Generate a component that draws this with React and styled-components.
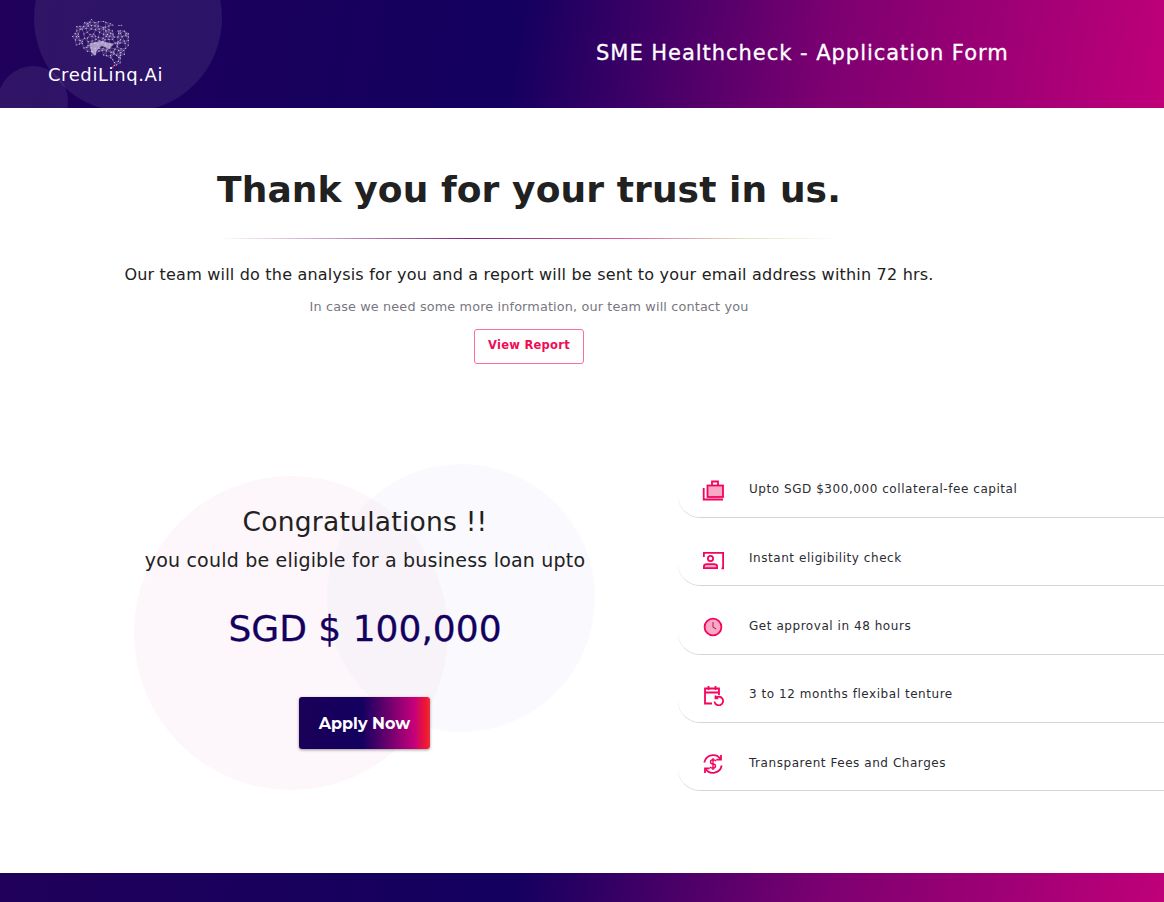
import React from "react";
import styled, { createGlobalStyle } from "styled-components";

const Global = createGlobalStyle`
  html, body { margin: 0; padding: 0; background: #fff; }
  body { font-family: "DejaVu Sans", "Noto Sans", sans-serif; color: #212121; }
  * { box-sizing: border-box; }
`;
const brand = `linear-gradient(100deg, #20005a 0%, #13005f 44%, #7d0071 71%, #bf0079 100%)`;
const Page = styled.div`
  width: 1164px; height: 902px; display: flex; flex-direction: column; overflow: hidden;
`;
const Header = styled.header`
  position: relative; height: 108px; flex: none; overflow: hidden;
  display: grid; grid-template-columns: 596px 1fr; align-items: center;
  background: ${brand};
`;
const HeaderCircle = styled.div`
  position: absolute; border-radius: 50%; background: rgba(255,255,255,0.08);
  left: ${p => p.$x}px; top: ${p => p.$y}px; width: ${p => p.$s}px; height: ${p => p.$s}px;
`;
const Logo = styled.div`
  position: relative; display: flex; flex-direction: column; align-items: center; align-self: start;
  width: 113px; margin: 0 0 0 49px; padding-top: 19px;
`;
const BrainSvg = styled.svg`
  width: 60px; height: 49px; margin-right: 7px; display: block;
`;
const LogoText = styled.div`
  color: #fff; font-size: 18px; line-height: 20px;
  letter-spacing: 0.6px; white-space: nowrap; margin-top: -3px;
`;
const HeaderTitle = styled.h1`
  position: relative; margin: -3px 0 0; color: #fff; font-size: 21px; font-weight: 400; line-height: 24px;
  -webkit-text-stroke: 0.3px #fff; white-space: nowrap; letter-spacing: 0.97px;
`;
const Main = styled.main`
  flex: 1; display: flex; flex-direction: column;
`;
const Thanks = styled.section`
  width: 1058px; display: flex; flex-direction: column; align-items: center; padding-top: 59px;
`;
const Heading = styled.h2`
  margin: 0; font-size: 36px; line-height: 46px; font-weight: 700; color: #212121; white-space: nowrap;
  letter-spacing: 0.1px;
`;
const Divider = styled.div`
  width: 622px; height: 1px; margin-top: 25px;
  background: linear-gradient(90deg, rgba(20,0,94,0) 0%, #83247a 40%, #e0589a 65%, #dfe6c2 85%, rgba(255,255,255,0) 100%);
`;
const Lead = styled.p`
  margin: 26px 0 0; font-size: 16px; line-height: 20px; color: #212121; white-space: nowrap; letter-spacing: 0.2px;
`;
const Note = styled.p`
  margin: 14px 0 0; font-size: 12.8px; line-height: 16px; color: #77777f; white-space: nowrap; letter-spacing: 0.15px;
`;
const ReportButton = styled.button`
  margin-top: 14px; width: 110px; height: 35px; background: #fff; border: 1px solid #fb6f9f; border-radius: 3px;
  color: #ef0b56; font: 700 11.5px "DejaVu Sans", sans-serif; padding: 0 0 3px; letter-spacing: 0.25px;
`;
const Offer = styled.section`
  display: grid; grid-template-columns: 678px 1fr; margin-top: 100px; flex: 1;
`;
const Eligibility = styled.div`
  position: relative; display: flex; flex-direction: column; align-items: center;
  width: 730px; padding-top: 42px;
`;
const Blob = styled.div`
  position: absolute; border-radius: 50%;
  left: ${p => p.$x}px; top: ${p => p.$y}px; width: ${p => p.$s}px; height: ${p => p.$s}px;
  background: ${p => p.$c};
`;
const Congrats = styled.div`
  position: relative; font-size: 26.5px; line-height: 32px; color: #212121; white-space: nowrap; letter-spacing: 0.25px;
`;
const Sub = styled.div`
  position: relative; margin-top: 10px; font-size: 19px; line-height: 24px; color: #212121; white-space: nowrap; letter-spacing: 0.2px;
`;
const Amount = styled.div`
  position: relative; margin-top: 35px; font-size: 36px; line-height: 44px; color: #13005f; white-space: nowrap;
  -webkit-text-stroke: 0.3px #13005f;
`;
const ApplyButton = styled.button`
  position: relative; margin: 46px 1px 0 0; width: 131px; height: 52px; border: 0; border-radius: 3px;
  color: #fff; font: 700 16px "Montserrat", "Open Sans", sans-serif; padding: 0;
  background: linear-gradient(90deg, #1a0058 0%, #13005f 48%, #c4007c 88%, #f0182f 97%, #e73040 100%);
  box-shadow: 0 1px 3px rgba(0,0,0,0.4);
`;
const Features = styled.ul`
  list-style: none; margin: -14.3px 0 0; padding: 0; display: flex; flex-direction: column; position: relative;
`;
const Feature = styled.li`
  height: 68.3px; display: flex; align-items: center; padding: 14px 0 0 24px; gap: 25px;
  border-bottom: 1px solid #d6d6d6; border-bottom-left-radius: 22px;
`;
const IconBox = styled.svg`
  width: 22px; height: 22px; flex: none;
`;
const FeatureText = styled.span`
  font-size: 12px; color: #2b2b33; white-space: nowrap; letter-spacing: 0.55px; margin-top: -2px;
`;
const Footer = styled.footer`
  height: 29px; flex: none;
  background: ${brand};
`;

const outline = [[0,16],[4,8],[12,3],[20,0],[30,2],[38,2],[48,5],[56,10],[60,18],[58,28],[54,31],[52,38],[50,46],[48,49],[42,47],[38,38],[30,36],[24,36],[20,38],[14,32],[6,28],[1,24]];
const inside = (x, y) => {
  let hit = false;
  for (let i = 0, j = outline.length - 1; i < outline.length; j = i++) {
    const [xi, yi] = outline[i], [xj, yj] = outline[j];
    if ((yi > y) !== (yj > y) && x < ((xj - xi) * (y - yi)) / (yj - yi) + xi) hit = !hit;
  }
  return hit;
};
const meshNodes = (() => {
  let seed = 7;
  const rnd = () => ((seed = (seed * 16807) % 2147483647) / 2147483647);
  const pts = [];
  for (let y = 0; y <= 49; y += 3.6) for (let x = 0; x <= 60; x += 3.8) {
    const px = x + rnd() * 2.6 - 1.3, py = y + rnd() * 2.6 - 1.3;
    if (inside(px, py)) pts.push([px, py]);
  }
  return pts;
})();
const meshLines = (() => {
  let d = "";
  meshNodes.forEach((a, i) => meshNodes.slice(i + 1).forEach(b => {
    if (Math.hypot(a[0] - b[0], a[1] - b[1]) < 5.4) d += `M${a[0].toFixed(1)} ${a[1].toFixed(1)}L${b[0].toFixed(1)} ${b[1].toFixed(1)}`;
  }));
  return d;
})();
const Brain = () => (
  <BrainSvg viewBox="0 0 60 49" fill="none">
    <path d={meshLines} stroke="#c9bddf" strokeWidth="0.4" strokeOpacity="0.75" />
    {meshNodes.map(([x, y], i) => <circle key={i} cx={x} cy={y} r="0.5" fill="#e4dcf0" />)}
    <path d="M18 24 L30 22 L42 25 L37 30 L30 27 L25 31 L23 37 L19 33Z" fill="#cfc4e4" fillOpacity="0.75" />
    <circle cx="41" cy="48" r="1" fill="#e0105e" />
  </BrainSvg>
);

const C = "#f5045f", F = "#f9a9c6";
const icons = [
  <IconBox viewBox="0 0 22 22" fill="none" stroke={C} strokeWidth="1.8" key="a">
    <rect x="5.500" y="6.500" width="15.500" height="11.500" fill={F}/><path d="M10 6.500V2.500h6v4"/><path d="M1.700 9v11.500H21"/>
  </IconBox>,
  <IconBox viewBox="0 0 22 22" fill="none" stroke={C} strokeWidth="1.8" key="b">
    <path d="M1.900 9V4.900h19.200v15.500h-1.600"/><circle cx="8.500" cy="10.500" r="2.600"/><path d="M1.900 20.200v-1.700q0-2.300 3-2.300h7.200q3 0 3 2.300v1.700z" fill={F}/>
  </IconBox>,
  <IconBox viewBox="0 0 22 22" fill="none" stroke={C} strokeWidth="1.8" key="c">
    <circle cx="11" cy="11" r="8.400" fill={F}/><path d="M11 6v5l3 2" strokeWidth="1.200" stroke="#c0305f"/>
  </IconBox>,
  <IconBox viewBox="0 0 22 22" fill="none" stroke={C} strokeWidth="1.8" key="d">
    <path d="M10 19.500H3v-15h14V11"/><path d="M3 8.500h14M6.500 2v4M13.500 2v4"/><path d="M12.500 17.500a4.300 4.300 0 1 0 1.400-3.700M13.500 11.500v2.800h2.800"/>
  </IconBox>,
  <IconBox viewBox="0 0 22 22" fill="none" stroke={C} strokeWidth="1.8" key="e">
    <path d="M2.300 9.500A9 9 0 0 1 18.500 6M19.700 12.500A9 9 0 0 1 3.500 16"/><path d="M19 2v4.700h-4.700M3 20v-4.700h4.700"/><path d="M14 8.200q-.8-1.400-3-1.400-2.500 0-2.500 2.100t2.500 2.100 2.500 2.100-2.500 2.100q-2.200 0-3-1.400M11 5v12" strokeWidth="1.400"/>
  </IconBox>,
];
const items = [
  "Upto SGD $300,000 collateral-fee capital",
  "Instant eligibility check",
  "Get approval in 48 hours",
  "3 to 12 months flexibal tenture",
  "Transparent Fees and Charges",
];

export default function App() {
  return (
    <Page>
      <Global />
      <Header>
        <HeaderCircle $x={34} $y={-76} $s={188} />
        <HeaderCircle $x={-2} $y={66} $s={70} />
        <Logo>
          <Brain />
          <LogoText>CrediLinq.Ai</LogoText>
        </Logo>
        <HeaderTitle>SME Healthcheck - Application Form</HeaderTitle>
      </Header>
      <Main>
        <Thanks>
          <Heading>Thank you for your trust in us.</Heading>
          <Divider />
          <Lead>Our team will do the analysis for you and a report will be sent to your email address within 72 hrs.</Lead>
          <Note>In case we need some more information, our team will contact you</Note>
          <ReportButton>View Report</ReportButton>
        </Thanks>
        <Offer>
          <Eligibility>
            <Blob $x={134} $y={12} $s={314} $c="#fdf6fa" />
            <Blob $x={327} $y={0} $s={268} $c="rgba(240,236,248,0.3)" />
            <Congrats>Congratulations !!</Congrats>
            <Sub>you could be eligible for a business loan upto</Sub>
            <Amount>SGD $ 100,000</Amount>
            <ApplyButton>Apply Now</ApplyButton>
          </Eligibility>
          <Features>
            {items.map((t, i) => (
              <Feature key={t}>
                {icons[i]}
                <FeatureText>{t}</FeatureText>
              </Feature>
            ))}
          </Features>
        </Offer>
      </Main>
      <Footer />
    </Page>
  );
}
